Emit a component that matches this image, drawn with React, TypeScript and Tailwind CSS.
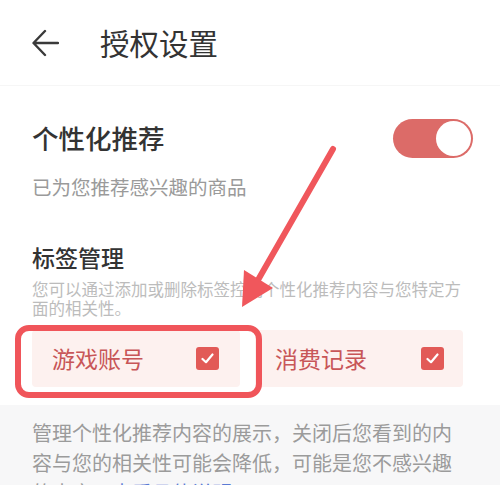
const BackIcon = () => (
    <svg width="28" height="28" viewBox="0 0 28 28" fill="none">
        <path d="M27 14H3M14 2L2.5 14L14 26" stroke="#3a3a3a" strokeWidth="2.4" strokeLinecap="round" strokeLinejoin="round" />
    </svg>
);

const CheckBox = () => (
    <span className="flex items-center justify-center w-[23px] h-[23px] rounded-[3px] bg-[#e25a57]">
        <svg width="13" height="11" viewBox="0 0 13 11" fill="none">
            <path d="M1.5 6L5 9.2L11.5 1.5" stroke="white" strokeWidth="2.2" strokeLinecap="round" strokeLinejoin="round" />
        </svg>
    </span>
);

const Tag = ({ label, pr }: { label: string; pr: string }) => (
    <div className={`flex items-center justify-between h-[57px] pl-5 ${pr} bg-[#fdf1ef] rounded-sm`}>
        <span className="text-[23px] leading-none text-[#c85658]">{label}</span>
        <CheckBox />
    </div>
);

export default function App() {
    return (
        <div
            className="relative w-[500px] h-[485px] overflow-hidden bg-white"
            style={{ fontFamily: '"Noto Sans CJK SC", "Noto Sans", sans-serif' }}
        >
            {/* Header */}
            <header className="flex items-center h-[86px] pl-[31px] border-b border-[#f6f6f6]">
                <BackIcon />
                <h1 className="ml-[41px] text-[29.5px] leading-none text-[#333333]">授权设置</h1>
            </header>

            {/* Settings */}
            <section className="pl-8">
                <div className="flex items-center justify-between mt-[33px] pr-[27px] h-[39px]">
                    <span className="text-[26.5px] leading-none font-medium text-[#333333]">个性化推荐</span>
                    <div className="flex justify-end items-center w-[80px] h-[39px] rounded-full bg-[#dc6b68] p-[2px]">
                        <span className="w-[35px] h-[35px] rounded-full bg-white" />
                    </div>
                </div>
                <p className="mt-[17px] text-[19.5px] leading-[24px] text-[#9a9a9a]">已为您推荐感兴趣的商品</p>

                <h2 className="mt-[43px] text-[23px] leading-[30px] font-medium text-[#333333]">标签管理</h2>
                <p className="mt-[8px] w-[436px] text-[16.5px] leading-[19px] text-[#bcbcbc]">
                    您可以通过添加或删除标签控制个性化推荐内容与您特定方面的相关性。
                </p>

                <div className="grid grid-cols-2 gap-[15px] w-[431px] mt-[12px]">
                    <Tag label="游戏账号" pr="pr-[21px]" />
                    <Tag label="消费记录" pr="pr-[19px]" />
                </div>
            </section>

            {/* Footer note */}
            <section className="mt-[18px] h-[200px] bg-[#f7f7f8] pl-8 pt-[13px]">
                <p className="w-[430px] text-[20px] leading-[30px] text-[#9b9b9b]">
                    管理个性化推荐内容的展示，关闭后您看到的内容与您的相关性可能会降低，可能是您不感兴趣的内容，
                    <span className="text-[#5a7bd5]">查看具体说明</span>
                </p>
            </section>

            {/* Annotation: highlight box */}
            <div className="absolute left-[15px] top-[325px] w-[247px] h-[73px] border-[6px] border-[#f0555a] rounded-[14px]" />

            {/* Annotation: arrow */}
            <svg className="absolute inset-0 pointer-events-none" width="500" height="485" viewBox="0 0 500 485">
                <line x1="333" y1="149" x2="258" y2="280" stroke="#f0575c" strokeWidth="6" strokeLinecap="round" />
                <polygon points="242,307 273,288 244,270" fill="#f0575c" />
            </svg>
        </div>
    );
}
